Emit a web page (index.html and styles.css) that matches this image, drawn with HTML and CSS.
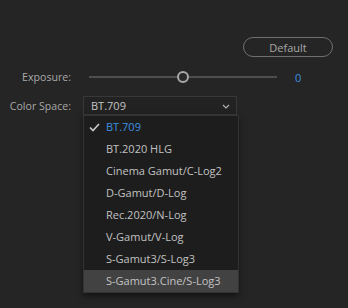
FILE: index.html
```html
<!DOCTYPE html>
<html lang="en">
<head>
    <meta charset="UTF-8">
    <title>Exposure</title>
    <link rel="stylesheet" href="styles.css">
</head>
<body>
    <div class="panel">
        <div class="top-row">
            <button class="btn-default">Default</button>
        </div>

        <div class="field">
            <span class="label">Exposure:</span>
            <div class="slider">
                <div class="track"></div>
                <div class="thumb"></div>
            </div>
            <span class="value">0</span>
        </div>

        <div class="field">
            <span class="label">Color Space:</span>
            <div class="select">
                <span>BT.709</span>
                <svg class="chev" width="8" height="5" viewBox="0 0 8 5"><path d="M1 1 L4 4 L7 1" fill="none" stroke="#b0b0b0" stroke-width="1.2"/></svg>

                <ul class="menu">
                    <li class="checked">
                        <svg class="check" width="11" height="9" viewBox="0 0 11 9"><path d="M1 4.5 L4 7.5 L10 1" fill="none" stroke="#c8c8c8" stroke-width="1.7"/></svg>
                        BT.709
                    </li>
                    <li>BT.2020 HLG</li>
                    <li>Cinema Gamut/C-Log2</li>
                    <li>D-Gamut/D-Log</li>
                    <li>Rec.2020/N-Log</li>
                    <li>V-Gamut/V-Log</li>
                    <li>S-Gamut3/S-Log3</li>
                    <li class="hover">S-Gamut3.Cine/S-Log3</li>
                </ul>
            </div>
        </div>
    </div>
</body>
</html>
```

FILE: styles.css
```css
body {
    margin: 0;
    background: #252525;
    font-family: "Open Sans", sans-serif;
    font-size: 11px;
    color: #a9a9a9;
}
.panel {
    width: 348px;
    height: 308px;
    padding-top: 37px;
    box-sizing: border-box;
}
.top-row {
    display: flex;
    justify-content: flex-end;
    padding-right: 15px;
    height: 20px;
}
.btn-default {
    width: 90px;
    height: 20px;
    border: 1px solid #707070;
    border-radius: 10px;
    background: transparent;
    color: #a8a8a8;
    font-family: "Open Sans", sans-serif;
    font-size: 11px;
    padding: 0;
}
.field {
    display: flex;
    align-items: center;
}
.field:nth-child(2) {
    margin-top: 10px;
    height: 20px;
}
.field:nth-child(3) {
    margin-top: 9px;
    height: 19px;
}
.label {
    width: 71px;
    text-align: right;
    flex: none;
    font-size: 10.6px;
}
.slider {
    position: relative;
    width: 188px;
    height: 12px;
    margin-left: 18px;
}
.track {
    position: absolute;
    left: 0;
    right: 0;
    top: 5px;
    height: 2px;
    background: #4e4e4e;
}
.thumb {
    position: absolute;
    left: 88px;
    top: 0;
    width: 8px;
    height: 8px;
    border: 2px solid #a9a9a9;
    border-radius: 50%;
    background: #2a2a2a;
}
.value {
    margin-left: 18px;
    color: #3d8fe0;
}
.select {
    position: relative;
    margin-left: 12px;
    width: 154px;
    height: 19px;
    box-sizing: border-box;
    border: 1px solid #383838;
    background: #222222;
    color: #c4c4c4;
    display: flex;
    align-items: center;
    justify-content: space-between;
    padding: 0 6px 0 7px;
}
.chev {
    margin-top: 1px;
}
.menu {
    position: absolute;
    left: -1px;
    top: 18px;
    width: 156px;
    margin: 0;
    padding: 0;
    list-style: none;
    background: #1d1d1d;
    border: 1px solid #333333;
    box-sizing: border-box;
    box-shadow: 0 3px 6px rgba(0, 0, 0, 0.5);
}
.menu li {
    height: 22px;
    line-height: 22px;
    padding-left: 22px;
    position: relative;
    color: #c2c2c2;
}
.menu li.checked {
    color: #3d8fe0;
}
.menu li.hover {
    background: #424242;
}
.check {
    position: absolute;
    left: 5px;
    top: 7px;
}
```
